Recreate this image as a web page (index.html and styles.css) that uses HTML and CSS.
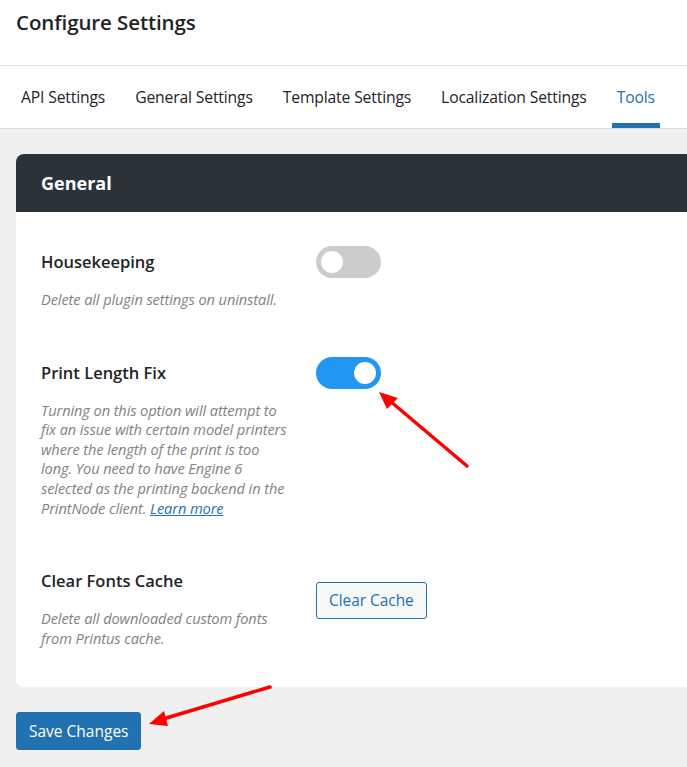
FILE: index.html
```html
<!DOCTYPE html>
<html lang="en">
<head>
<meta charset="utf-8">
<title>Configure Settings</title>
<link rel="stylesheet" href="styles.css">
</head>
<body>
<div class="page">
  <header class="topbar">
    <h1 class="title">Configure Settings</h1>
  </header>
  <nav class="tabs">
    <a class="tab">API Settings</a>
    <a class="tab">General Settings</a>
    <a class="tab">Template Settings</a>
    <a class="tab">Localization Settings</a>
    <a class="tab active">Tools</a>
  </nav>
  <main class="content">
    <section class="card">
      <div class="card-head">General</div>
      <div class="card-body">
        <div class="row">
          <div class="info">
            <h3 class="label">Housekeeping</h3>
            <p class="desc">Delete all plugin settings on uninstall.</p>
          </div>
          <div class="control"><span class="toggle"><span class="knob"></span></span></div>
        </div>
        <div class="row">
          <div class="info">
            <h3 class="label">Print Length Fix</h3>
            <p class="desc">Turning on this option will attempt to<br>fix an issue with certain model printers<br>where the length of the print is too<br>long. You need to have Engine 6<br>selected as the printing backend in the<br>PrintNode client. <a class="link">Learn more</a></p>
          </div>
          <div class="control"><span class="toggle on"><span class="knob"></span></span></div>
        </div>
        <div class="row">
          <div class="info">
            <h3 class="label">Clear Fonts Cache</h3>
            <p class="desc">Delete all downloaded custom fonts<br>from Printus cache.</p>
          </div>
          <div class="control"><button class="btn-secondary">Clear Cache</button></div>
        </div>
      </div>
    </section>
    <button class="btn-primary">Save Changes</button>
  </main>
  <svg class="arrows" width="687" height="767" viewBox="0 0 687 767">
    <line x1="467" y1="466" x2="390" y2="401" stroke="#ff0000" stroke-width="3.5" stroke-linecap="round"/>
    <polygon points="379,392 398,398 387,409" fill="#ff0000"/>
    <line x1="270" y1="687" x2="163" y2="719" stroke="#ff0000" stroke-width="3.5" stroke-linecap="round"/>
    <polygon points="149,724 164,711 168,726" fill="#ff0000"/>
  </svg>
</div>
</body>
</html>
```

FILE: styles.css
```css
* { box-sizing: border-box; }
html, body { margin: 0; padding: 0; }
body {
  background: #f0f0f1;
  font-family: "Open Sans", "Noto Sans", sans-serif;
  color: #1d2327;
  width: 687px;
  height: 767px;
  overflow: hidden;
}
.page { position: relative; min-height: 767px; }
.topbar {
  background: #fff;
  height: 66px;
  border-bottom: 1px solid #e2e2e2;
  padding: 8px 16px 0;
}
.title {
  margin: 0;
  font-size: 20.5px;
  font-weight: 600;
  line-height: 28px;
  color: #1d2327;
  letter-spacing: -0.1px;
}
.tabs {
  background: #fff;
  height: 63px;
  border-bottom: 1px solid #dcdcde;
  display: flex;
  gap: 20px;
  padding: 0 0 0 16px;
}
.tab {
  display: block;
  padding: 19px 5px 0;
  height: 62px;
  font-size: 15.7px;
  line-height: 24px;
  color: #1d2327;
  letter-spacing: -0.15px;
  white-space: nowrap;
}
.tab.active {
  color: #2271b1;
  border-bottom: 5px solid #2271b1;
  border-radius: 4px 4px 0 0;
}
.content { padding: 25px 0 0 16px; }
.card {
  background: #fff;
  border-radius: 8px 0 0 8px;
  overflow: hidden;
  width: 700px;
}
.card-head {
  background: #2c3338;
  color: #fff;
  height: 58px;
  padding: 16px 25px 0;
  font-size: 18px;
  line-height: 26px;
  font-weight: 700;
}
.card-body {
  padding: 34px 25px 39px;
  display: flex;
  flex-direction: column;
  gap: 47px;
}
.row {
  display: grid;
  grid-template-columns: 265px auto;
  column-gap: 10px;
  align-items: start;
}
.label {
  margin: 0;
  font-size: 16.5px;
  line-height: 32px;
  font-weight: 600;
  color: #1d2327;
}
.desc {
  margin: 12px 0 0;
  font-size: 14.6px;
  line-height: 19.6px;
  font-style: italic;
  color: #828282;
  white-space: nowrap;
  letter-spacing: -0.1px;
}
.link { color: #2271b1; text-decoration: underline; }
.toggle {
  display: flex;
  align-items: center;
  width: 65px;
  height: 32px;
  border-radius: 16px;
  background: #cccccc;
  padding: 0 5px;
}
.toggle.on { background: #2196f3; justify-content: flex-end; }
.knob {
  width: 22px;
  height: 22px;
  border-radius: 50%;
  background: #fff;
}
.btn-secondary {
  margin-top: 17px;
  height: 37px;
  padding: 0 12px;
  border: 1px solid #2271b1;
  border-radius: 3px;
  background: #f6f7f7;
  color: #2271b1;
  font-family: inherit;
  font-size: 15.4px;
  line-height: 35px;
}
.btn-primary {
  margin-top: 25px;
  height: 38px;
  padding: 0 12px;
  border: 1px solid #2271b1;
  border-radius: 3px;
  background: #2271b1;
  color: #fff;
  font-family: inherit;
  font-size: 15.5px;
  line-height: 36px;
}
.arrows { position: absolute; left: 0; top: 0; pointer-events: none; }
```
